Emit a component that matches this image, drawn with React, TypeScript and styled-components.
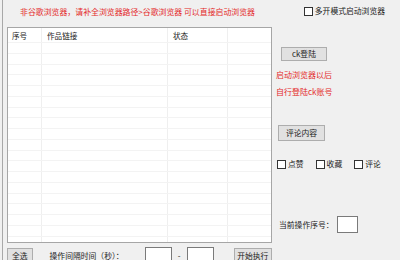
import React from 'react';
import styled, { createGlobalStyle } from 'styled-components';

const GlobalStyle = createGlobalStyle`
  html, body {
    margin: 0;
    padding: 0;
    background: #f0f0f0;
  }
  body {
    font-family: "Noto Sans CJK SC", "Noto Sans", sans-serif;
    font-size: 8px;
    color: #1a1a1a;
  }
`;

// 整体窗口
const Window = styled.div`
  position: relative;
  width: 400px;
  height: 260px;
  overflow: hidden;
  background: #f0f0f0;
  box-sizing: border-box;
  border-left: 1px solid #a8a8a8;
  margin-left: 2px;
`;

const TopBar = styled.div`
  height: 27px;
  display: flex;
  align-items: flex-start;
  justify-content: space-between;
  box-sizing: border-box;
  padding: 6px 17px 0 17px;
`;

const Notice = styled.div<{ $size?: number }>`
  color: #e42a2a;
  font-size: ${p => p.$size || 8}px;
  line-height: 12px;
  white-space: nowrap;
`;

const CheckLabel = styled.label<{ $gap?: number }>`
  display: flex;
  align-items: center;
  gap: 2px;
  font-size: 7.8px;
  line-height: 10px;
  white-space: nowrap;
  margin-right: ${p => p.$gap || 0}px;
`;

const Box = styled.span`
  width: 7px;
  height: 7px;
  border: 1px solid #333;
  background: #fff;
  display: inline-block;
`;

const Body = styled.div`
  display: flex;
  align-items: flex-start;
`;

const LeftCol = styled.div`
  width: 265px;
  margin-left: 4px;
  display: flex;
  flex-direction: column;
`;

const Table = styled.div`
  height: 216px;
  background: #fff;
  border: 1px solid #a6a6a6;
  box-sizing: border-box;
  overflow: hidden;
`;

const Row = styled.div<{ $head?: boolean }>`
  display: grid;
  grid-template-columns: 34px 126px 60px 1fr;
  height: ${p => (p.$head ? 15 : 10.75)}px;
  border-bottom: 1px solid #f3f3f3;
  box-sizing: border-box;
`;

const Cell = styled.div`
  border-right: 1px solid #efefef;
  padding: 3px 0 0 5px;
  font-size: 7.6px;
  line-height: 10px;
  white-space: nowrap;
  &:first-child {
    padding-left: 4px;
  }
  &:last-child {
    border-right: none;
  }
`;

const BottomRow = styled.div`
  display: flex;
  align-items: flex-start;
  margin-top: 5px;
  height: 20px;
`;

const Button = styled.div<{ $w: number; $h?: number; $ml?: number }>`
  width: ${p => p.$w}px;
  height: ${p => p.$h || 16}px;
  margin-left: ${p => p.$ml || 0}px;
  background: #e1e1e1;
  border: 1px solid #adadad;
  box-sizing: border-box;
  display: flex;
  align-items: center;
  justify-content: center;
  font-size: 7.8px;
  line-height: 10px;
  white-space: nowrap;
`;

const Input = styled.div<{ $w: number; $h: number }>`
  width: ${p => p.$w}px;
  height: ${p => p.$h}px;
  background: #fff;
  border: 1px solid #7a7a7a;
  box-sizing: border-box;
`;

const Label = styled.span`
  font-size: 7.8px;
  line-height: 10px;
  white-space: nowrap;
`;

const InputGroup = styled.div`
  display: flex;
  align-items: center;
  margin-left: 21px;
  height: 14px;
`;

const Dash = styled.span`
  width: 15px;
  text-align: center;
  font-size: 8px;
`;

const IntervalLabel = styled(Label)`
  margin-top: 3px;
  margin-left: 17px;
`;

const RightCol = styled.div`
  flex: 1;
  display: flex;
  flex-direction: column;
  align-items: flex-start;
  padding-left: 4px;
`;

const Gap = styled.div<{ $h: number }>`
  height: ${p => p.$h}px;
  flex: none;
`;

const CheckRow = styled.div`
  display: flex;
  align-items: center;
  padding-left: 1px;
`;

const SeqRow = styled.div`
  display: flex;
  align-items: center;
  gap: 3px;
  padding-left: 3px;
`;

const ROWS = 19;

export default function App() {
  return (
    <>
      <GlobalStyle />
      <Window>
        <TopBar>
          <Notice $size={7.9}>非谷歌浏览器，请补全浏览器路径&gt;谷歌浏览器 可以直接启动浏览器</Notice>
          <CheckLabel>
            <Box />
            多开模式启动浏览器
          </CheckLabel>
        </TopBar>
        <Body>
          <LeftCol>
            <Table>
              <Row $head>
                <Cell>序号</Cell>
                <Cell>作品链接</Cell>
                <Cell>状态</Cell>
                <Cell />
              </Row>
              {Array.from({ length: ROWS }).map((_, i) => (
                <Row key={i}>
                  <Cell />
                  <Cell />
                  <Cell />
                  <Cell />
                </Row>
              ))}
            </Table>
            <BottomRow>
              <Button $w={26} $h={16}>全选</Button>
              <IntervalLabel>操作间隔时间（秒）：</IntervalLabel>
              <InputGroup>
                <Input $w={27} $h={16} />
                <Dash>-</Dash>
                <Input $w={27} $h={16} />
              </InputGroup>
              <Button $w={39} $h={16} $ml={20}>开始执行</Button>
            </BottomRow>
          </LeftCol>
          <RightCol>
            <Gap $h={20} />
            <Button $w={46} $h={14} $ml={5}>ck登陆</Button>
            <Gap $h={8} />
            <Notice>启动浏览器以后</Notice>
            <Gap $h={5} />
            <Notice>自行登陆ck账号</Notice>
            <Gap $h={27} />
            <Button $w={47} $h={16} $ml={2}>评论内容</Button>
            <Gap $h={18} />
            <CheckRow>
              <CheckLabel $gap={12}>
                <Box />
                点赞
              </CheckLabel>
              <CheckLabel $gap={12}>
                <Box />
                收藏
              </CheckLabel>
              <CheckLabel>
                <Box />
                评论
              </CheckLabel>
            </CheckRow>
            <Gap $h={47} />
            <SeqRow>
              <Label>当前操作序号：</Label>
              <Input $w={21} $h={17} />
            </SeqRow>
          </RightCol>
        </Body>
      </Window>
    </>
  );
}
